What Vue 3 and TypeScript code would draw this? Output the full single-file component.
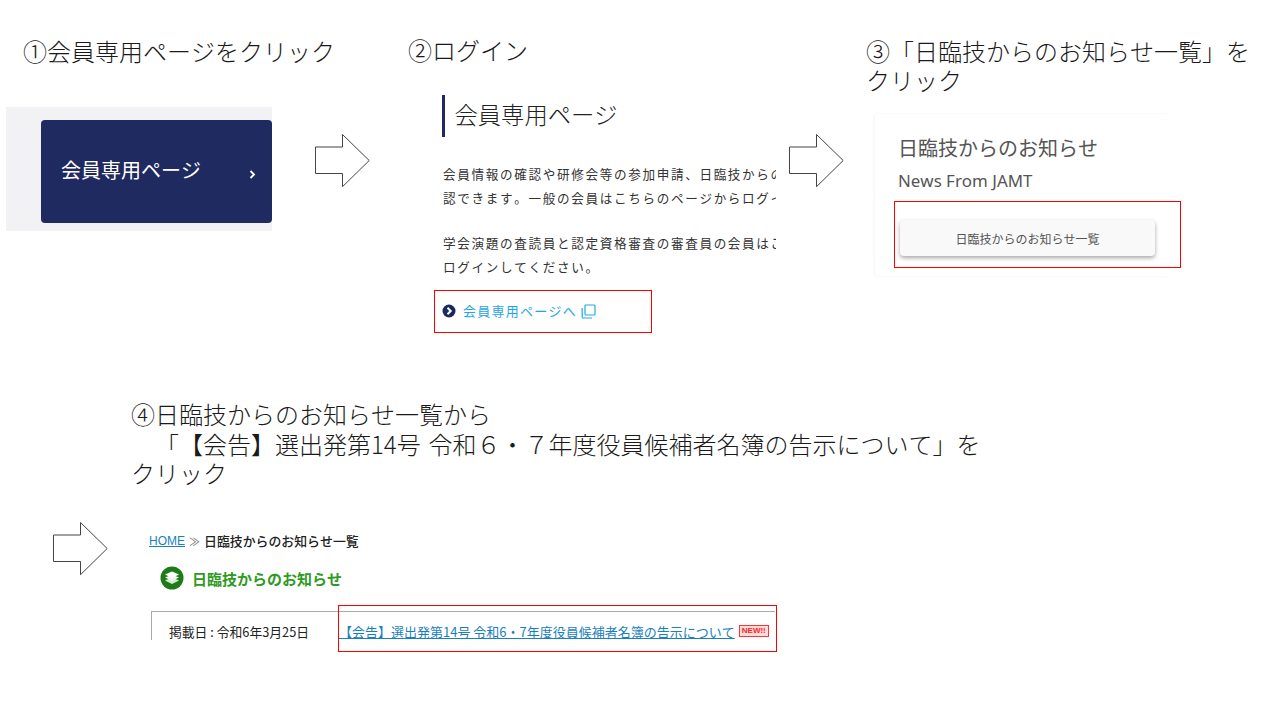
<script setup lang="ts">
const paragraphs: string[][] = [
  ['会員情報の確認や研修会等の参加申請、日臨技からのお知らせを確', '認できます。一般の会員はこちらのページからログインしてください。'],
  ['学会演題の査読員と認定資格審査の審査員の会員はこちらのページから', 'ログインしてください。'],
]
const arrows = ['arrow-a', 'arrow-b', 'arrow-c']
</script>

<template>
  <main class="slide">
    <h2 class="step step-1">①会員専用ページをクリック</h2>
    <h2 class="step step-2">②ログイン</h2>
    <h2 class="step step-3">③「日臨技からのお知らせ一覧」を<br />クリック</h2>
    <h2 class="step step-4">④日臨技からのお知らせ一覧から<br />　「【会告】選出発第14号 令和６・７年度役員候補者名簿の告示について」を<br />クリック</h2>

    <svg v-for="a in arrows" :key="a" class="arrow" :class="a" width="56" height="54" viewBox="0 0 56 54">
      <path d="M.5 13H27.5V.5L54.2 26.5 27.5 52.7V39.5H.5Z" fill="#fff" stroke="#444" stroke-width="1" />
    </svg>

    <section class="panel-member">
      <a class="member-btn">
        <span>会員専用ページ</span>
        <svg width="7" height="9" viewBox="0 0 7 9"><path d="M1.5 1 5 4.5 1.5 8" fill="none" stroke="#fff" stroke-width="1.9" /></svg>
      </a>
    </section>

    <section class="panel-login">
      <h3 class="login-title">会員専用ページ</h3>
      <div class="login-copy">
        <p v-for="(p, i) in paragraphs" :key="i">
          <span v-for="line in p" :key="line" class="line">{{ line }}</span>
        </p>
      </div>
      <a class="login-link">
        <svg class="bullet" width="14" height="14" viewBox="0 0 14 14">
          <circle cx="7" cy="7" r="6.5" fill="#1b2a5e" />
          <path d="M5.5 3.8 8.7 7 5.5 10.2" fill="none" stroke="#fff" stroke-width="2" />
        </svg>
        <span>会員専用ページへ</span>
        <svg class="copy" width="15" height="15" viewBox="0 0 15 15" fill="none" stroke="#1ea7e8" stroke-width="1.2">
          <rect x="4" y="1" width="10" height="10" rx="1" />
          <path d="M1.2 4v9a1 1 0 0 0 1 1h9" />
        </svg>
      </a>
    </section>
    <div class="redbox box-login"></div>

    <section class="panel-news">
      <h3 class="news-title">日臨技からのお知らせ</h3>
      <p class="news-sub">News From JAMT</p>
      <a class="news-btn">日臨技からのお知らせ一覧</a>
    </section>
    <div class="redbox box-news"></div>

    <section class="panel-list">
      <nav class="crumbs">
        <a class="home">HOME</a>
        <span class="sep">≫</span>
        <span class="current">日臨技からのお知らせ一覧</span>
      </nav>
      <div class="list-head">
        <svg width="24" height="24" viewBox="0 0 24 24">
          <circle cx="12" cy="12" r="11.5" fill="#1f7a1a" />
          <path d="M12 11.5 19 14.5 12 18 5 14.5Z" fill="#d8e8d5" />
          <path d="M12 8.5 19 11.5 12 15 5 11.5Z" fill="#eef5ec" />
          <path d="M12 5.5 19 8.5 12 12 5 8.5Z" fill="#fff" />
        </svg>
        <h3>日臨技からのお知らせ</h3>
      </div>
      <div class="list-row">
        <span class="date">掲載日 : 令和6年3月25日</span>
        <a class="notice">【会告】選出発第14号 令和6・7年度役員候補者名簿の告示について</a>
        <span class="new">NEW!!</span>
      </div>
    </section>
    <div class="redbox box-list"></div>
  </main>
</template>

<style>
html, body { margin: 0; background: #fff; }
</style>

<style scoped>
.slide {
  position: relative;
  width: 1280px;
  height: 720px;
  overflow: hidden;
  background: #fff;
  color: #222;
  font-family: "Noto Sans CJK JP", "Liberation Sans", sans-serif;
  text-spacing-trim: space-all;
  font-kerning: none;
}
.step {
  position: absolute;
  margin: 0;
  font-size: 24px;
  font-weight: 300;
  line-height: 29px;
  white-space: nowrap;
  color: #1a1a1a;
}
.step-1 { left: 23px; top: 36px; }
.step-2 { left: 408px; top: 35px; }
.step-3 { left: 866px; top: 36px; }
.step-4 { left: 131px; top: 399px; line-height: 29.5px; word-spacing: 2.5px; }

.arrow { position: absolute; }
.arrow-a { left: 315px; top: 134px; }
.arrow-b { left: 789px; top: 134px; }
.arrow-c { left: 53px; top: 522px; }

.redbox { position: absolute; border: 1px solid #f00; box-sizing: border-box; }
.box-login { left: 434px; top: 290px; width: 218px; height: 43px; }
.box-news { left: 894px; top: 201px; width: 287px; height: 67px; }
.box-list { left: 338px; top: 605px; width: 439px; height: 47px; }

.panel-member {
  position: absolute;
  left: 6px;
  top: 107px;
  width: 266px;
  height: 124px;
  box-sizing: border-box;
  padding: 13px 0 8px 35px;
  display: flex;
  background: #f2f2f5;
}
.member-btn {
  flex: 1;
  display: flex;
  align-items: center;
  justify-content: space-between;
  padding: 0 16px 5px 20px;
  border-radius: 4px;
  background: #1f2a60;
  color: #fff;
  font-size: 20px;
}
.member-btn svg { margin-top: 10px; }

.panel-login {
  position: absolute;
  left: 442px;
  top: 95px;
  width: 334px;
  overflow: hidden;
}
.login-title {
  margin: 0;
  height: 42px;
  box-sizing: border-box;
  padding-left: 9.5px;
  border-left: 3px solid #1f2a60;
  font-size: 23.3px;
  font-weight: 300;
  line-height: 38px;
  color: #222;
}
.login-copy { margin-top: 25px; padding-left: 1px; }
.login-copy p { margin: 0 0 21px; }
.line {
  display: block;
  height: 24px;
  font-size: 12.6px;
  letter-spacing: 1.65px;
  line-height: 24px;
  white-space: nowrap;
  color: #333;
}
.login-link {
  display: flex;
  align-items: center;
  margin-top: -1px;
  color: #1ea7e8;
  font-size: 13px;
  letter-spacing: 1.25px;
  line-height: 24px;
}
.login-link .bullet { margin-right: 7px; }
.login-link .copy { margin-left: 4px; }

.panel-news {
  position: absolute;
  left: 875px;
  top: 114px;
  width: 295px;
  height: 162px;
  box-sizing: border-box;
  padding: 19px 15px 0 24px;
  border-radius: 4px;
  background: #fff;
  box-shadow: -1px 0 3px rgba(0, 0, 0, 0.05);
  color: #555;
}
.news-title { margin: 0 0 0 -1px; font-size: 20px; font-weight: 400; line-height: 30px; }
.news-sub { margin: 6px 0 0 -1px; font-size: 16.9px; line-height: 24px; font-family: "Noto Sans", sans-serif; }
.news-btn {
  display: flex;
  align-items: center;
  justify-content: center;
  height: 36px;
  margin: 27px 0 0 1px;
  border-radius: 4px;
  background: #f9f9f9;
  box-shadow: 0 2px 4px rgba(0, 0, 0, 0.35);
  font-size: 12px;
}

.panel-list {
  position: absolute;
  left: 149px;
  top: 531px;
  width: 628px;
  height: 109px;
  overflow: hidden;
}
.crumbs {
  display: flex;
  align-items: center;
  gap: 4px;
  height: 20px;
  font-size: 12.9px;
}
.home { color: #1a7fc0; text-decoration: underline; font-size: 12px; font-family: "Liberation Sans", sans-serif; }
.sep { color: #666; font-size: 11px; }
.current { color: #222; font-weight: 500; position: relative; top: -1px; }
.list-head {
  display: flex;
  align-items: center;
  gap: 8px;
  height: 24px;
  margin: 15px 0 0 11px;
}
.list-head h3 { margin: 0; color: #2f9a1f; font-size: 15px; font-weight: 700; }
.list-row {
  display: flex;
  align-items: flex-start;
  height: 40px;
  margin: 21px 2px 0 2px;
  padding: 10px 0 0 17px;
  box-sizing: border-box;
  border-top: 1px solid #aaa;
  border-left: 1px solid #aaa;
  font-size: 12.8px;
}
.date { width: 170px; flex: none; white-space: nowrap; color: #222; line-height: 19px; }
.notice { color: #1a7fc0; text-decoration: underline; white-space: nowrap; font-size: 13px; line-height: 19px; }
.new {
  margin: 3px 0 0 4px;
  padding: 0 2px;
  border: 1px solid #f33;
  background: #fdd;
  color: #f22;
  font: 700 8px/10px "Liberation Sans", sans-serif;
}
</style>
